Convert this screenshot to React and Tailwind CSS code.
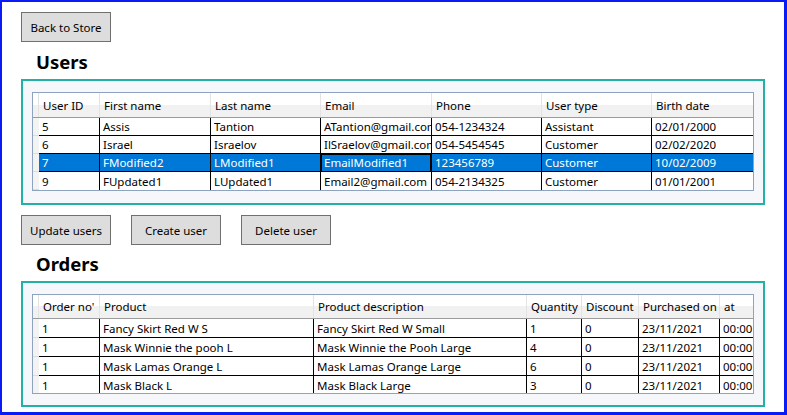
import clsx from 'clsx';

const userCols = [
  { label: 'User ID', w: 'w-[61px]' },
  { label: 'First name', w: 'w-[111px]' },
  { label: 'Last name', w: 'w-[110px]' },
  { label: 'Email', w: 'w-[111px]' },
  { label: 'Phone', w: 'w-[110px]' },
  { label: 'User type', w: 'w-[110px]' },
  { label: 'Birth date', w: 'flex-1' }
];

const userRows = [
  ['5', 'Assis', 'Tantion', 'ATantion@gmail.com', '054-1234324', 'Assistant', '02/01/2000'],
  ['6', 'Israel', 'Israelov', 'IlSraelov@gmail.com', '054-5454545', 'Customer', '02/02/2020'],
  ['7', 'FModified2', 'LModified1', 'EmailModified1', '123456789', 'Customer', '10/02/2009'],
  ['9', 'FUpdated1', 'LUpdated1', 'Email2@gmail.com', '054-2134325', 'Customer', '01/01/2001']
];

const orderCols = [
  { label: "Order no'", w: 'w-[61px]' },
  { label: 'Product', w: 'w-[214px]' },
  { label: 'Product description', w: 'w-[213px]' },
  { label: 'Quantity', w: 'w-[55px]' },
  { label: 'Discount', w: 'w-[57px]' },
  { label: 'Purchased on', w: 'w-[81px]' },
  { label: 'at', w: 'flex-1' }
];

const orderRows = [
  ['1', 'Fancy Skirt Red W S', 'Fancy Skirt Red W Small', '1', '0', '23/11/2021', '00:00'],
  ['1', 'Mask Winnie the pooh L', 'Mask Winnie the Pooh Large', '4', '0', '23/11/2021', '00:00'],
  ['1', 'Mask Lamas Orange L', 'Mask Lamas Orange Large', '6', '0', '23/11/2021', '00:00'],
  ['1', 'Mask Black L', 'Mask Black Large', '3', '0', '23/11/2021', '00:00']
];

function Button({ children }) {
  return (
    <button className="w-[90px] h-[30px] shrink-0 bg-[#dddddd] border border-[#707070] text-[11.5px] text-black flex items-center justify-center pt-[1px]">
      {children}
    </button>
  );
}

function Grid({ cols, rows, height, headerH, rowH, selected, focusCol }) {
  return (
    <div className={clsx('ml-[9px] mt-[11px] w-[722px] border border-[#8ea3bd] bg-white overflow-hidden text-[11.5px]', height)}>
      {/* column headers */}
      <div className={clsx('flex border-b border-[#9b9b9b] bg-[linear-gradient(to_bottom,#ffffff_50%,#f1f1f1_50%)]', headerH)}>
        <div className="w-[6px] shrink-0 border-r border-[#e3e3e3]" />
        {cols.map((c, i) => (
          <div
            key={c.label}
            className={clsx(
              'shrink-0 flex items-center pl-[4px] pt-[1px] whitespace-nowrap overflow-hidden text-black',
              c.w,
              i < cols.length - 1 && 'border-r border-[#e3e3e3]'
            )}
          >
            {c.label}
          </div>
        ))}
      </div>

      {rows.map((row, r) => {
        const isSel = r === selected;
        return (
          <div key={r} className={clsx('flex', rowH)}>
            <div className="w-[6px] shrink-0 bg-[#f3f3f3] border-b border-[#dcdcdc]" />
            {row.map((cell, i) => (
              <div
                key={i}
                className={clsx(
                  'shrink-0 flex items-center pl-[3px] pt-[1px] whitespace-nowrap overflow-hidden border-b border-black',
                  cols[i].w,
                  r === rows.length - 1 && 'border-b-0',
                  i < cols.length - 1 && 'border-r border-r-black',
                  isSel ? 'bg-[#0078d7] text-white' : 'text-black',
                  isSel && i === focusCol && 'shadow-[inset_1px_1px_0_0_#000,inset_-1px_0_0_0_#000]'
                )}
              >
                {cell}
              </div>
            ))}
          </div>
        );
      })}
    </div>
  );
}

function Section({ title, children }) {
  return (
    <>
      <h2 className="h-[24px] pl-[15px] text-[18.5px] leading-[24px] font-bold text-black">{title}</h2>
      <div className="mt-[5px] h-[126px] border-2 border-[#22b1a7] bg-[#f5f7fb]">
        {children}
      </div>
    </>
  );
}

export default function App() {
  return (
    <div className="w-[787px] h-[415px] overflow-hidden bg-white border-l-2 border-t-2 border-r-[3px] border-b-[3px] border-[#0a1cf5] font-['Noto_Sans',sans-serif] text-[12px]">
      <div className="px-[19px] pt-[10px] flex flex-col">
        <Button>Back to Store</Button>

        <div className="mt-[8px]">
          <Section title="Users">
            <Grid
              cols={userCols}
              rows={userRows}
              height="h-[99px]"
              headerH="h-[25px]"
              rowH="h-[18px]"
              selected={2}
              focusCol={3}
            />
          </Section>
        </div>

        <div className="mt-[10px] flex gap-[20px]">
          <Button>Update users</Button>
          <Button>Create user</Button>
          <Button>Delete user</Button>
        </div>

        <div className="mt-[7px]">
          <Section title="Orders">
            <Grid
              cols={orderCols}
              rows={orderRows}
              height="h-[100px]"
              headerH="h-[24px]"
              rowH="h-[19px]"
              selected={-1}
            />
          </Section>
        </div>
      </div>
    </div>
  );
}
